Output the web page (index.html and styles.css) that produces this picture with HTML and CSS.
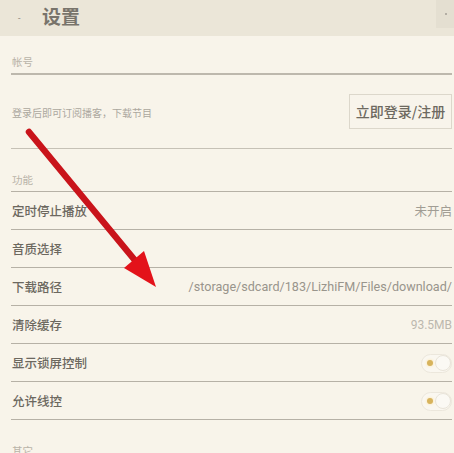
FILE: index.html
```html
<!DOCTYPE html>
<html lang="zh">
<head>
<meta charset="utf-8">
<title>设置</title>
<link rel="stylesheet" href="styles.css">
</head>
<body>
<div class="page">
  <header class="topbar">
    <span class="back">-</span>
    <span class="title">设置</span>
    <span class="corner"><i></i></span>
  </header>
  <main class="content">
    <div class="section-label first">帐号</div>
    <div class="account-row">
      <span class="hint">登录后即可订阅播客，下载节目</span>
      <button class="login-btn">立即登录/注册</button>
    </div>
    <div class="section-label">功能</div>
    <div class="row"><span class="label">定时停止播放</span><span class="value">未开启</span></div>
    <div class="row"><span class="label">音质选择</span></div>
    <div class="row"><span class="label">下载路径</span><span class="value path">/storage/sdcard/183/LizhiFM/Files/download/</span></div>
    <div class="row"><span class="label">清除缓存</span><span class="value light">93.5MB</span></div>
    <div class="row"><span class="label">显示锁屏控制</span><span class="toggle"><i class="dot"></i><i class="knob"></i></span></div>
    <div class="row"><span class="label">允许线控</span><span class="toggle"><i class="dot"></i><i class="knob"></i></span></div>
    <div class="section-label last">其它</div>
  </main>
  <svg class="arrow" width="454" height="453" viewBox="0 0 454 453" aria-hidden="true">
    <line x1="29" y1="132" x2="138" y2="264" stroke="#c9141b" stroke-width="6.5" stroke-linecap="round"/>
    <polygon points="124,268 144,251 156,287" fill="#e3121a"/>
  </svg>
</div>
</body>
</html>
```

FILE: styles.css
```css
html, body {
  margin: 0;
  padding: 0;
  background: #f8f4ea;
}
body {
  font-family: Roboto, "Noto Sans CJK SC", "Noto Sans", sans-serif;
  color: #6e6a61;
  width: 454px;
  height: 453px;
  overflow: hidden;
}
.page {
  position: relative;
  width: 454px;
  height: 453px;
  overflow: hidden;
}
.topbar {
  height: 36px;
  background: #ebe6d8;
  display: flex;
  align-items: center;
}
.back {
  width: 6px;
  margin-left: 18px;
  font-size: 9px;
  color: #8a867d;
  line-height: 1;
}
.title {
  margin-left: 18px;
  font-family: "Noto Sans CJK SC", sans-serif;
  font-size: 19px;
  font-weight: 700;
  color: #78746b;
  line-height: 24px;
  margin-top: -4px;
}
.corner {
  margin-left: auto;
  align-self: flex-start;
  width: 18px;
  height: 28px;
  background: #e4dfd1;
  display: flex;
  align-items: center;
  justify-content: center;
}
.corner i {
  width: 2px;
  height: 2px;
  background: #b3aea4;
  margin-top: -1px;
  margin-left: 2px;
}
.content {
  padding: 0 2px 0 11px;
}
.section-label {
  font-family: "Noto Sans CJK SC", sans-serif;
  font-size: 10.5px;
  line-height: 14px;
  color: #b8b3a8;
  padding: 24px 0 4px 1px;
  border-bottom: 1px solid #b6b1a6;
}
.section-label.first {
  padding-top: 19px;
  border-bottom: 2px solid #bdb8ad;
}
.section-label.last {
  border-bottom: none;
}
.account-row {
  height: 73px;
  display: flex;
  align-items: center;
  justify-content: space-between;
  border-bottom: 1px solid #c6c1b6;
}
.hint {
  font-family: "Noto Sans CJK SC", sans-serif;
  font-size: 10px;
  color: #aba79e;
  padding-left: 1px;
  margin-top: 1px;
}
.login-btn {
  width: 103px;
  height: 35px;
  margin-top: -1px;
  border: 1px solid #dcd7cb;
  background: #f8f4eb;
  font-family: "Noto Sans CJK SC", sans-serif;
  font-size: 14px;
  font-weight: 500;
  color: #6d6960;
  padding: 0;
  white-space: nowrap;
  display: flex;
  align-items: center;
  justify-content: center;
}
.row {
  height: 37px;
  display: flex;
  align-items: center;
  justify-content: space-between;
  border-bottom: 1px solid #b6b1a6;
}
.label {
  font-family: "Noto Sans CJK SC", sans-serif;
  font-size: 12.5px;
  font-weight: 500;
  color: #6c685f;
  padding-left: 1px;
}
.value {
  font-family: "Noto Sans CJK SC", sans-serif;
  font-size: 12.5px;
  color: #a19d94;
  white-space: nowrap;
}
.value.path {
  font-family: Roboto, sans-serif;
  font-size: 12.6px;
  color: #99958c;
}
.value.light {
  font-family: Roboto, sans-serif;
  font-size: 12px;
  color: #bcb8ae;
}
.toggle {
  position: relative;
  width: 31px;
  height: 19px;
  box-sizing: border-box;
  border: 1px solid #ece7dc;
  border-radius: 10px;
  background: #faf7f0;
  display: flex;
  align-items: center;
  margin-top: 1px;
}
.toggle .dot {
  width: 6px;
  height: 6px;
  border-radius: 50%;
  background: #d7b35c;
  margin-left: 5px;
  box-shadow: 0 0 2px 1px #fbeed0;
}
.toggle .knob {
  margin-left: auto;
  width: 16px;
  height: 16px;
  box-sizing: border-box;
  border-radius: 50%;
  border: 1px solid #e9e4d9;
  background: #fbf9f4;
}
.arrow {
  position: absolute;
  left: 0;
  top: 0;
  pointer-events: none;
}
```
